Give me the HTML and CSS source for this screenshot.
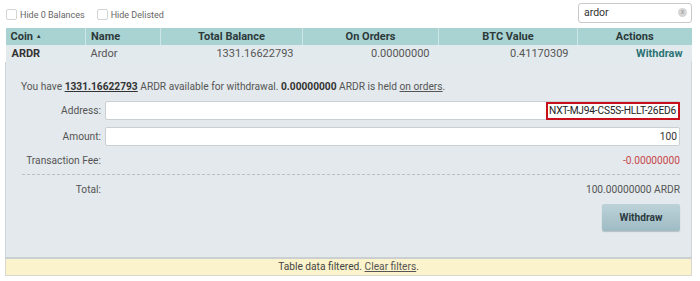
FILE: index.html
```html
<!doctype html>
<html lang="en">
<head>
    <meta charset="UTF-8">
    <title>Balances</title>
    <link rel="stylesheet" href="styles.css">
</head>
<body>
    <div class="page">

        <div class="topBar">
            <label class="check"><span class="box"></span>Hide 0 Balances</label>
            <label class="check"><span class="box"></span>Hide Delisted</label>
            <div class="search">
                <span class="searchText">ardor</span>
                <span class="clearBtn">x</span>
            </div>
        </div>

        <table class="balances">
            <colgroup>
                <col style="width:80px">
                <col style="width:75px">
                <col style="width:142px">
                <col style="width:136px">
                <col style="width:139px">
                <col>
            </colgroup>
            <thead>
                <tr>
                    <th class="left">Coin <span class="arrow">&#9650;</span></th>
                    <th class="left">Name</th>
                    <th>Total Balance</th>
                    <th>On Orders</th>
                    <th>BTC Value</th>
                    <th>Actions</th>
                </tr>
            </thead>
            <tbody>
                <tr class="coinRow">
                    <td class="coin">ARDR</td>
                    <td>Ardor</td>
                    <td class="num">1331.16622793</td>
                    <td class="num">0.00000000</td>
                    <td class="num">0.41170309</td>
                    <td class="num"><a class="action">Withdraw</a></td>
                </tr>
                <tr class="detailRow">
                    <td colspan="6">
                        <div class="detail">
                            <p class="summary">You have <u class="amt">1331.16622793</u> ARDR available for withdrawal. <b>0.00000000</b> ARDR is held <u>on orders</u>.</p>

                            <div class="form">
                                <div class="label">Address:</div>
                                <div class="field">
                                    <span class="addr">NXT-MJ94-CS5S-HLLT-26ED6</span>
                                </div>

                                <div class="label">Amount:</div>
                                <div class="field num">100</div>

                                <div class="label feeRow">Transaction Fee:</div>
                                <div class="value fee feeRow">-0.00000000</div>
                            </div>

                            <div class="divider"></div>

                            <div class="form">
                                <div class="label">Total:</div>
                                <div class="value">100.00000000 ARDR</div>
                            </div>

                            <div class="btnRow">
                                <div class="withdrawBtn">Withdraw</div>
                            </div>
                        </div>
                    </td>
                </tr>
            </tbody>
        </table>

        <div class="filterNote">Table data filtered. <u>Clear filters</u>.</div>

    </div>
</body>
</html>
```

FILE: styles.css
```css
body
{
    margin:           0;
    background:       #fff;
    font-family:      Roboto, "Liberation Sans", sans-serif;
    font-size:        11px;
    color:            #444;
}

.page
{
    width:            687px;
    margin-left:      5px;
}

.topBar
{
    height:           28px;
    display:          flex;
    align-items:      center;
    gap:              11px;
}

.check
{
    display:          flex;
    align-items:      center;
    gap:              3px;
    color:            #666;
    font-size:        9px;
    margin-left:      1px;
    margin-top:       1px;
}

.box
{
    width:            9px;
    height:           9px;
    border:           1px solid #d4d4d4;
    border-radius:    2px;
    background:       #fff;
}

.search
{
    margin-left:      auto;
    width:            103px;
    height:           18px;
    border:           1px solid #c8c8c8;
    border-radius:    3px;
    display:          flex;
    align-items:      center;
    padding:          0 4px 0 5px;
    margin-top:       -3px;
}

.searchText
{
    flex:             1;
    color:            #333;
    font-size:        10.5px;
}

.clearBtn
{
    width:            9px;
    height:           9px;
    border-radius:    50%;
    background:       #d6d6d6;
    color:            #999;
    font-size:        7px;
    line-height:      8px;
    text-align:       center;
}

.balances
{
    width:            100%;
    border-collapse:  collapse;
    table-layout:     fixed;
}

.balances th
{
    background:       #a9d3d3;
    color:            #2c3a3a;
    font-weight:      bold;
    font-size:        11px;
    height:           17px;
    padding:          0 5px;
    text-align:       center;
    border-left:      1px solid #cfe6e6;
}

.balances th:first-child
{
    border-left:      none;
}

.balances th.left
{
    text-align:       left;
}

.arrow
{
    font-size:        6px;
    vertical-align:   2px;
}

.coinRow td
{
    background:       #e3eaed;
    height:           17px;
    padding:          0 5px;
    color:            #555;
}

.coinRow td.coin
{
    font-weight:      bold;
    color:            #333;
    padding-left:     6px;
}

.num
{
    text-align:       right;
}

.coinRow td.num
{
    padding-right:    9px;
}

.action
{
    color:            #2b7475;
    font-weight:      bold;
}

.detailRow td
{
    padding:          0;
    background:       #e3e9ec;
    border-left:      1px solid #cfd5d8;
    border-right:     1px solid #cfd5d8;
    border-bottom:    2px solid #cacfd1;
}

.detail
{
    padding:          19px 11px 26px 14px;
    font-size:        10.2px;
    line-height:      12px;
}

.summary
{
    margin:           0 0 8px 1px;
    color:            #555;
}

.summary u
{
    color:            #555;
}

.summary .amt
{
    font-weight:      bold;
    color:            #333;
}

.summary b
{
    color:            #333;
}

.form
{
    display:          grid;
    grid-template-columns: 81px 1fr;
    column-gap:       4px;
    row-gap:          7px;
    align-items:      center;
}

.label
{
    text-align:       right;
    color:            #555;
}

.feeRow
{
    margin-top:       2px;
}

.field
{
    height:           17px;
    background:       #fff;
    border:           1px solid #c9cfd2;
    border-radius:    2px;
    display:          flex;
    justify-content:  flex-end;
    align-items:      center;
    padding:          0 2px;
    color:            #333;
}

.addr
{
    border:           2px solid #c8101c;
    padding:          1px 2px 1px 1px;
    margin-right:     -3px;
    color:            #222;
    letter-spacing:   -0.2px;
}

.value
{
    text-align:       right;
    color:            #555;
}

.fee
{
    color:            #c8474c;
}

.divider
{
    border-top:       1px dashed #b9c0c3;
    margin:           7px 0 9px 2px;
}

.btnRow
{
    display:          flex;
    justify-content:  flex-end;
    margin-top:       8px;
}

.withdrawBtn
{
    width:            78px;
    height:           27px;
    line-height:      27px;
    text-align:       center;
    font-weight:      bold;
    color:            #2b3a40;
    border-radius:    2px;
    background:       linear-gradient(#bcd2d8, #9ebbc4);
    box-shadow:       0 1px 1px #b5c0c4;
}

.filterNote
{
    background:       #fbf3cb;
    border:           1px solid #d8d8d0;
    border-top:       none;
    height:           16px;
    line-height:      16px;
    text-align:       center;
    color:            #444;
    font-size:        10.2px;
}

.filterNote u
{
    color:            #555;
}
```
